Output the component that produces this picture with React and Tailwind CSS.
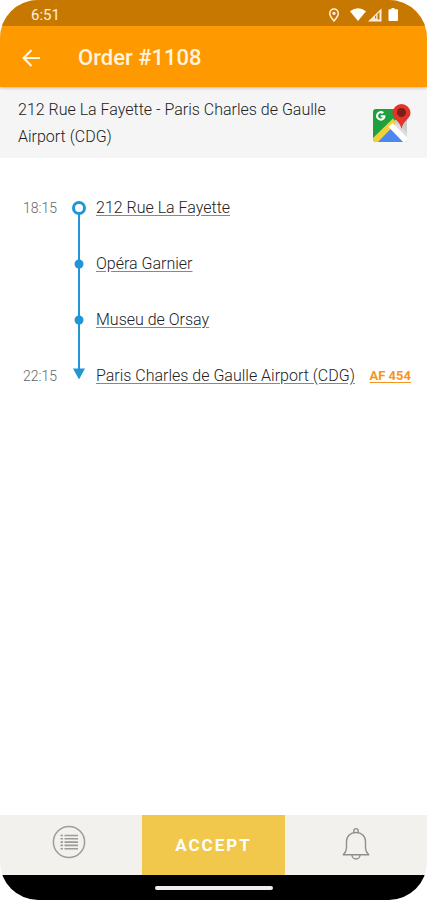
import React from 'react';

const stops = [
  { time: '18:15', name: '212 Rue La Fayette', marker: 'start' },
  { time: '', name: 'Opéra Garnier', marker: 'stop' },
  { time: '', name: 'Museu de Orsay', marker: 'stop' },
  { time: '22:15', name: 'Paris Charles de Gaulle Airport (CDG)', marker: 'end', flight: 'AF 454' },
];

const StatusIcons = () => (
  <svg width="72" height="16" viewBox="0 0 72 16" fill="none" aria-hidden="true">
    <path d="M7 2a4.300 4.300 0 0 0-4.300 4.300C2.700 9.200 7 14 7 14s4.300-4.800 4.300-7.700A4.300 4.300 0 0 0 7 2z" stroke="#ffeedd" strokeWidth="1.500" />
    <circle cx="7" cy="6.300" r="1.600" fill="#ffeedd" />
    <path d="M23 4.200Q31 -1.500 39 4.200L31 14z" fill="#fff" />
    <path d="M54.500 1.500V14.500H41z" fill="#ffeedd" />
    <path d="M50.500 7V12.500h2V5zM48 9.500v2h1.200V8z" fill="#c77800" />
    <path d="M64.500 1h3v1.300H70a1 1 0 0 1 1 1V13a1 1 0 0 1-1 1h-7.500a1 1 0 0 1-1-1V3.300a1 1 0 0 1 1-1h2z" fill="#fff" />
  </svg>
);

const BackIcon = () => (
  <svg width="20" height="20" viewBox="0 0 20 20" fill="none" stroke="#fff4e0" strokeWidth="2.200" aria-hidden="true">
    <path d="M18 10H2.500M9.500 2L1.700 10l7.800 8" />
  </svg>
);

const MapsIcon = () => (
  <svg width="38" height="38" viewBox="0 0 38 38" aria-hidden="true">
    <defs>
      <clipPath id="tile">
        <rect x="0" y="5" width="34" height="33" rx="3" />
      </clipPath>
    </defs>
    <g clipPath="url(#tile)">
      <rect y="5" width="34" height="33" fill="#1fa03f" />
      <path d="M34 5v33H0z" fill="#dedede" />
      <path d="M22 17l12 12V8z" fill="#cccccc" />
      <path d="M17 24L32 39H2z" fill="#4b87ef" />
      <path d="M-2 36L20 14.500l3.500 4.500L3 40z" fill="#f3cf3c" />
      <path d="M15.500 23l4-4L36 35.500V42h-2z" fill="#fff" />
    </g>
    <path d="M12 11.200H7.800v2h2c-.3.900-1 1.400-2 1.400a2.700 2.700 0 1 1 1.700-4.800l1.500-1.500a4.800 4.800 0 1 0-3.200 8.400c2.800 0 4.700-2 4.700-4.600 0-.3 0-.6-.5-.9z" fill="#fff" />
    <path d="M28.500 0A9 9 0 0 0 19.500 9c0 3.200 2.200 5.200 4.300 7.500 2.300 2.400 4.100 4.800 4.700 8.500.6-3.700 2.400-6.100 4.700-8.500 2.100-2.300 4.300-4.300 4.300-7.500A9 9 0 0 0 28.500 0z" fill="#e2342b" />
    <circle cx="28.500" cy="8.500" r="4.500" fill="#7d1f18" />
  </svg>
);

const ListIcon = () => (
  <svg width="34" height="34" viewBox="0 0 34 34" fill="none" stroke="#9b9b9b" aria-hidden="true">
    <circle cx="17" cy="17" r="15.600" strokeWidth="1.500" />
    <path d="M12.500 10.500H26M12.500 13.800H26M12.500 17.100H26M12.500 20.400H26M12.500 23.700H26" strokeWidth="1.600" />
    <path d="M8.500 10.500h2.500M8.500 13.800h2.500M8.500 17.100h2.500M8.500 20.400h2.500M8.500 23.700h2.500" strokeWidth="1.600" />
  </svg>
);

const BellIcon = () => (
  <svg width="28" height="34" viewBox="0 0 28 34" fill="none" stroke="#8f8f8f" strokeWidth="1.400" strokeLinejoin="round" aria-hidden="true">
    <path d="M11.800 6V3.800a2.200 2.200 0 1 1 4.400 0V6" />
    <path d="M4.500 21V14.500C4.500 9 8.500 5.500 14 5.500s9.500 3.500 9.500 9V21c0 2.500 1 4.500 3.200 6.800H1.300C3.500 25.500 4.500 23.500 4.500 21z" />
    <path d="M10 28a4 4 0 0 0 8 0" />
  </svg>
);

const Marker = ({ type }) => (
  <svg className="w-4 h-14 shrink-0" viewBox="0 0 16 56" fill="#2196d6" aria-hidden="true">
    {type === 'start' && (
      <>
        <path d="M7 34h2v22H7z" />
        <circle cx="8" cy="28" r="5.500" fill="#fff" stroke="#2196d6" strokeWidth="3" />
      </>
    )}
    {type === 'stop' && (
      <>
        <path d="M7 0h2v56H7z" />
        <circle cx="8" cy="28" r="4.500" />
      </>
    )}
    {type === 'end' && (
      <>
        <path d="M7 0h2v22H7z" />
        <path d="M2 20.500h12L8 31.500z" />
      </>
    )}
  </svg>
);

const App = () => {
  return (
    <div className="min-h-screen bg-white">
      <div className="min-h-screen flex flex-col overflow-hidden rounded-[38px] bg-white font-['Roboto',sans-serif]">
        <header className="relative bg-[#ff9900] shadow-[0_1px_3px_rgba(0,0,0,0.25)]">
          <div className="h-[26px] flex items-center justify-between bg-[#c77800] pl-[31px] pr-7 pt-1">
            <span className="text-[15px] text-[#ffeedd]">6:51</span>
            <StatusIcons />
          </div>
          <div className="h-[61px] flex items-center gap-9 px-[22px] pt-[2px]">
            <button type="button" aria-label="Back">
              <BackIcon />
            </button>
            <h1 className="text-[22px] font-medium text-[#fff4e0]">Order #1108</h1>
          </div>
        </header>

        <section className="flex items-center justify-between gap-9 bg-[#f5f5f5] pl-[18px] pr-4 pt-[9px] pb-2">
          <p className="text-base leading-[27px] font-light text-[#222]">
            212 Rue La Fayette - Paris Charles de Gaulle Airport (CDG)
          </p>
          <button type="button" aria-label="Open in Maps" className="shrink-0">
            <MapsIcon />
          </button>
        </section>

        <main className="flex-1 pt-[22px]">
          <ol>
            {stops.map((stop) => (
              <li key={stop.name} className="h-14 flex items-center pr-4">
                <span className="w-[57px] shrink-0 text-right text-sm font-light text-[#666]">{stop.time}</span>
                <span className="ml-[14px] mr-[9px] flex">
                  <Marker type={stop.marker} />
                </span>
                <a href="#stop" className="text-base font-light text-[#222] underline decoration-[#888] underline-offset-2 whitespace-nowrap">{stop.name}</a>
                {stop.flight && (
                  <a href="#flight" className="ml-auto text-[13px] font-bold text-[#f7941d] underline underline-offset-2 whitespace-nowrap">{stop.flight}</a>
                )}
              </li>
            ))}
          </ol>
        </main>

        <footer>
          <nav className="h-[60px] grid grid-cols-3 bg-[#f2f1ed]">
            <button type="button" aria-label="Orders" className="flex items-center justify-center pr-1 pb-[6px]">
              <ListIcon />
            </button>
            <button type="button" className="bg-[#f1c84c] pt-[2px] text-[17px] font-bold tracking-[2px] text-white">
              ACCEPT
            </button>
            <button type="button" aria-label="Notifications" className="flex items-center justify-center pb-[2px]">
              <BellIcon />
            </button>
          </nav>
          <div className="h-[25px] flex items-center justify-center bg-black">
            <div className="w-[118px] h-1 rounded-full bg-[#eee]"></div>
          </div>
        </footer>
      </div>
    </div>
  );
};

export default App;
